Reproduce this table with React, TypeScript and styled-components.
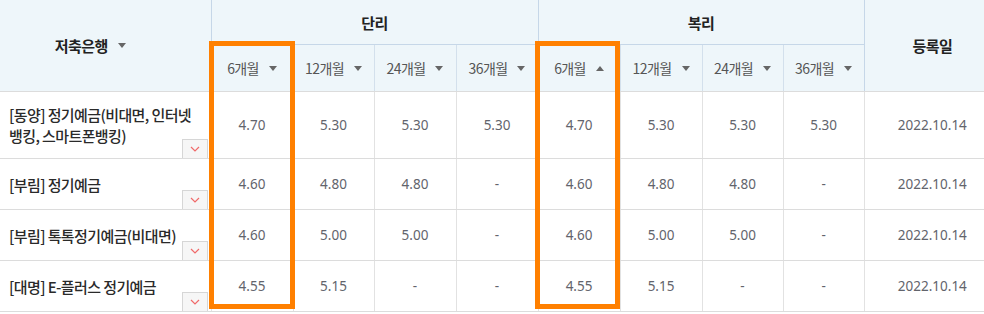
import styled, { createGlobalStyle } from "styled-components";

type Rate = string;

type Product = {
  name: string;
  simple: Rate[];
  compound: Rate[];
  date: string;
};

const terms = ["6개월", "12개월", "24개월", "36개월"];

const products: Product[] = [
  {
    name: "[동양] 정기예금(비대면, 인터넷 뱅킹, 스마트폰뱅킹)",
    simple: ["4.70", "5.30", "5.30", "5.30"],
    compound: ["4.70", "5.30", "5.30", "5.30"],
    date: "2022.10.14",
  },
  {
    name: "[부림] 정기예금",
    simple: ["4.60", "4.80", "4.80", "-"],
    compound: ["4.60", "4.80", "4.80", "-"],
    date: "2022.10.14",
  },
  {
    name: "[부림] 톡톡정기예금(비대면)",
    simple: ["4.60", "5.00", "5.00", "-"],
    compound: ["4.60", "5.00", "5.00", "-"],
    date: "2022.10.14",
  },
  {
    name: "[대명] E-플러스 정기예금",
    simple: ["4.55", "5.15", "-", "-"],
    compound: ["4.55", "5.15", "-", "-"],
    date: "2022.10.14",
  },
];

const colWidths = [211, 82, 81, 82, 82, 82, 82, 81, 81, 136];

export default function App() {
  return (
    <>
      <GlobalStyle />
      <Wrap>
        <Table>
          <colgroup>
            {colWidths.map((w, i) => (
              <col key={i} style={{ width: w }} />
            ))}
          </colgroup>
          <thead>
            <tr>
              <GroupTh rowSpan={2} $first>
                <Sortable>
                  저축은행 <Caret $dir="down" />
                </Sortable>
              </GroupTh>
              <GroupTh colSpan={4}>단리</GroupTh>
              <GroupTh colSpan={4}>복리</GroupTh>
              <GroupTh rowSpan={2}>등록일</GroupTh>
            </tr>
            <tr>
              {terms.map((t) => (
                <TermTh key={"s" + t}>
                  <Sortable>
                    {t} <Caret $dir="down" />
                  </Sortable>
                </TermTh>
              ))}
              {terms.map((t, i) => (
                <TermTh key={"c" + t}>
                  <Sortable>
                    {t} <Caret $dir={i === 0 ? "up" : "down"} />
                  </Sortable>
                </TermTh>
              ))}
            </tr>
          </thead>
          <tbody>
            {products.map((p, idx) => (
              <Row key={p.name} $tall={idx === 0}>
                <NameTd>
                  {p.name}
                  <MoreButton type="button" aria-label="상세보기">
                    <svg width="10" height="6" viewBox="0 0 10 6">
                      <polyline
                        points="1,1 5,5 9,1"
                        fill="none"
                        stroke="#f06a6a"
                        strokeWidth="1.2"
                      />
                    </svg>
                  </MoreButton>
                </NameTd>
                {p.simple.map((r, i) => (
                  <RateTd key={"s" + i}>{r}</RateTd>
                ))}
                {p.compound.map((r, i) => (
                  <RateTd key={"c" + i}>{r}</RateTd>
                ))}
                <RateTd>{p.date}</RateTd>
              </Row>
            ))}
          </tbody>
        </Table>
        <Highlight style={{ left: 209, width: 86 }} />
        <Highlight style={{ left: 535, width: 85 }} />
      </Wrap>
    </>
  );
}

const GlobalStyle = createGlobalStyle`
  html, body {
    margin: 0;
    padding: 0;
    background: #ffffff;
    overflow: hidden;
  }
  body {
    font-family: "Noto Sans CJK KR", "Noto Sans", sans-serif;
  }
`;

const Wrap = styled.div`
  position: relative;
  width: 1000px;
`;

const Table = styled.table`
  width: 1000px;
  table-layout: fixed;
  border-collapse: collapse;
  border-spacing: 0;
`;

const GroupTh = styled.th<{ $first?: boolean }>`
  height: 44px;
  padding: ${({ $first }) => ($first ? "0 30px 0 0" : "0")};
  background: #eef6fa;
  border-left: 1px solid #c6d7e8;
  border-bottom: 1px solid #c6d7e8;
  color: #222;
  font-size: 15px;
  font-weight: 700;
  letter-spacing: -0.5px;
  text-align: center;

  &:first-child {
    border-left: 0;
  }

  thead tr:first-child &[rowspan] {
    border-bottom: 1px solid #dcdcdc;
  }
`;

const TermTh = styled.th`
  height: 46px;
  padding: 0;
  background: #eef6fa;
  border-left: 1px solid #d3e0ec;
  border-bottom: 1px solid #dcdcdc;
  color: #555;
  font-size: 14px;
  font-weight: 400;
  letter-spacing: -0.6px;
  text-align: center;
`;

const Sortable = styled.span`
  display: inline-flex;
  align-items: center;
  gap: 6px;
  white-space: nowrap;
`;

const Caret = styled.i<{ $dir: "up" | "down" }>`
  display: inline-block;
  width: 0;
  height: 0;
  margin-left: 4px;
  border-left: 4.5px solid transparent;
  border-right: 4.5px solid transparent;
  ${({ $dir }) =>
    $dir === "down"
      ? "border-top: 5px solid #666;"
      : "border-bottom: 5px solid #666;"}
`;

const Row = styled.tr<{ $tall: boolean }>`
  height: ${({ $tall }) => ($tall ? "67px" : "51px")};
`;

const NameTd = styled.td`
  position: relative;
  padding: 0 12px 0 9px;
  border-bottom: 1px solid #dcdcdc;
  color: #2a2a2a;
  font-size: 15px;
  font-weight: 500;
  letter-spacing: -0.6px;
  line-height: 21px;
  text-align: left;
  word-break: keep-all;
`;

const RateTd = styled.td`
  padding: 0;
  border-left: 1px solid #e2e2e2;
  border-bottom: 1px solid #dcdcdc;
  color: #62646c;
  font-family: "Noto Sans", "Noto Sans CJK KR", sans-serif;
  font-size: 13.5px;
  text-align: center;
`;

const MoreButton = styled.button`
  position: absolute;
  right: 3px;
  bottom: 0;
  display: grid;
  place-items: center;
  width: 26px;
  height: 19px;
  padding: 0;
  border: 1px solid #d6d6d6;
  border-bottom: 0;
  background: #f6f6f6;
  cursor: pointer;
`;

const Highlight = styled.div`
  position: absolute;
  top: 41px;
  height: 268px;
  box-sizing: border-box;
  border: 5px solid #ff8000;
  pointer-events: none;
`;
